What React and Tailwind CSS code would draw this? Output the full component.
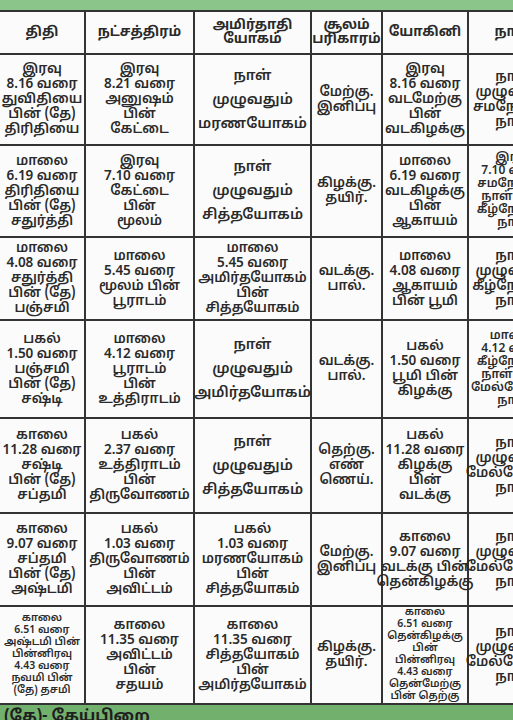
import React from "react";

const header = [
  ["திதி"],
  ["நட்சத்திரம்"],
  ["அமிர்தாதி", "யோகம்"],
  ["சூலம்", "பரிகாரம்"],
  ["யோகினி"],
  ["நாள்"],
];

const rows = [
  {
    h: "h-[91px]",
    cells: [
      { l: ["இரவு", "8.16 வரை", "துவிதியை", "பின் (தே)", "திரிதியை"] },
      { l: ["இரவு", "8.21 வரை", "அனுஷம்", "பின்", "கேட்டை"] },
      { l: ["நாள்", "முழுவதும்", "மரணயோகம்"], big: true },
      { l: ["மேற்கு.", "இனிப்பு"] },
      { l: ["இரவு", "8.16 வரை", "வடமேற்கு", "பின்", "வடகிழக்கு"] },
      { l: ["நாள்", "முழுவதும்", "சமநோக்கு", "நாள்"] },
    ],
  },
  {
    h: "h-[92px]",
    cells: [
      { l: ["மாலை", "6.19 வரை", "திரிதியை", "பின் (தே)", "சதுர்த்தி"] },
      { l: ["இரவு", "7.10 வரை", "கேட்டை", "பின்", "மூலம்"] },
      { l: ["நாள்", "முழுவதும்", "சித்தயோகம்"], big: true },
      { l: ["கிழக்கு.", "தயிர்."] },
      { l: ["மாலை", "6.19 வரை", "வடகிழக்கு", "பின்", "ஆகாயம்"] },
      { l: ["இரவு", "7.10 வரை", "சமநோக்கு", "நாள் பின்", "கீழ்நோக்கு", "நாள்"], small: true },
    ],
  },
  {
    h: "h-[83px]",
    cells: [
      { l: ["மாலை", "4.08 வரை", "சதுர்த்தி", "பின் (தே)", "பஞ்சமி"] },
      { l: ["மாலை", "5.45 வரை", "மூலம் பின்", "பூராடம்"] },
      { l: ["மாலை", "5.45 வரை", "அமிர்தயோகம்", "பின்", "சித்தயோகம்"] },
      { l: ["வடக்கு.", "பால்."] },
      { l: ["மாலை", "4.08 வரை", "ஆகாயம்", "பின் பூமி"] },
      { l: ["நாள்", "முழுவதும்", "கீழ்நோக்கு", "நாள்"] },
    ],
  },
  {
    h: "h-[98px]",
    cells: [
      { l: ["பகல்", "1.50 வரை", "பஞ்சமி", "பின் (தே)", "சஷ்டி"] },
      { l: ["மாலை", "4.12 வரை", "பூராடம்", "பின்", "உத்திராடம்"] },
      { l: ["நாள்", "முழுவதும்", "அமிர்தயோகம்"], big: true },
      { l: ["வடக்கு.", "பால்."] },
      { l: ["பகல்", "1.50 வரை", "பூமி பின்", "கிழக்கு"] },
      { l: ["மாலை", "4.12 வரை", "கீழ்நோக்கு", "நாள் பின்", "மேல்நோக்கு", "நாள்"], small: true },
    ],
  },
  {
    h: "h-[95px]",
    cells: [
      { l: ["காலை", "11.28 வரை", "சஷ்டி", "பின் (தே)", "சப்தமி"] },
      { l: ["பகல்", "2.37 வரை", "உத்திராடம்", "பின்", "திருவோணம்"] },
      { l: ["நாள்", "முழுவதும்", "சித்தயோகம்"], big: true },
      { l: ["தெற்கு.", "எண்", "ணெய்."] },
      { l: ["பகல்", "11.28 வரை", "கிழக்கு", "பின்", "வடக்கு"] },
      { l: ["நாள்", "முழுவதும்", "மேல்நோக்கு", "நாள்"] },
    ],
  },
  {
    h: "h-[93px]",
    cells: [
      { l: ["காலை", "9.07 வரை", "சப்தமி", "பின் (தே)", "அஷ்டமி"] },
      { l: ["பகல்", "1.03 வரை", "திருவோணம்", "பின்", "அவிட்டம்"] },
      { l: ["பகல்", "1.03 வரை", "மரணயோகம்", "பின்", "சித்தயோகம்"] },
      { l: ["மேற்கு.", "இனிப்பு"] },
      { l: ["காலை", "9.07 வரை", "வடக்கு பின்", "தென்கிழக்கு"] },
      { l: ["நாள்", "முழுவதும்", "மேல்நோக்கு", "நாள்"] },
    ],
  },
  {
    h: "h-[92px]",
    cells: [
      { l: ["காலை", "6.51 வரை", "அஷ்டமி பின்", "பின்னிரவு", "4.43 வரை", "நவமி பின்", "(தே) தசமி"], tiny: true },
      { l: ["காலை", "11.35 வரை", "அவிட்டம்", "பின்", "சதயம்"] },
      { l: ["காலை", "11.35 வரை", "சித்தயோகம்", "பின்", "அமிர்தயோகம்"] },
      { l: ["கிழக்கு.", "தயிர்."] },
      { l: ["காலை", "6.51 வரை", "தென்கிழக்கு", "பின்", "பின்னிரவு", "4.43 வரை", "தென்மேற்கு", "பின் தெற்கு"], tiny: true },
      { l: ["நாள்", "முழுவதும்", "மேல்நோக்கு", "நாள்"] },
    ],
  },
];

const widths = ["w-[86px]", "w-[109px]", "w-[117px]", "w-[71px]", "w-[86px]", "w-[90px]"];

function Cell({ c }) {
  const size = c.tiny
    ? "text-[10.5px] leading-[12px]"
    : c.small
    ? "text-[12px] leading-[13px]"
    : c.big
    ? "text-[14.5px] leading-[24px]"
    : "text-[13.5px] leading-[15px]";
  return (
    <td className="border-2 border-[#333333] p-0 align-middle text-center">
      <div className={`flex flex-col items-center whitespace-nowrap ${size}`}>
        {c.l.map((t, i) => (
          <span key={i}>{t}</span>
        ))}
      </div>
    </td>
  );
}

export default function App() {
  return (
    <div
      className="w-[513px] h-[720px] overflow-hidden bg-[#72b06d] text-[#2a2a2a] font-semibold"
      style={{ fontFamily: '"Noto Sans Tamil", "Noto Sans", "Liberation Sans", sans-serif' }}
    >
      <div className="h-[10px] bg-[#8cc58a]" />
      <table className="table-fixed border-collapse bg-[#fbfbfb] -ml-[2px] w-[561px]">
        <colgroup>
          {widths.map((w, i) => (
            <col key={i} className={w} />
          ))}
        </colgroup>
        <thead>
          <tr className="h-[43px]">
            {header.map((h, i) => (
              <th
                key={i}
                className="border-2 border-[#333333] p-0 align-middle text-center font-bold text-[13.5px] leading-[14px] whitespace-nowrap"
              >
                {h.map((t, j) => (
                  <div key={j}>{t}</div>
                ))}
              </th>
            ))}
          </tr>
        </thead>
        <tbody>
          {rows.map((r, i) => (
            <tr key={i} className={r.h}>
              {r.cells.map((c, j) => (
                <Cell key={j} c={c} />
              ))}
            </tr>
          ))}
        </tbody>
      </table>
      <div className="pl-[4px] pt-[3px] text-[16px] font-bold text-[#1e1e1e] leading-[18px]">
        (தே)- தேய்பிறை
      </div>
    </div>
  );
}
